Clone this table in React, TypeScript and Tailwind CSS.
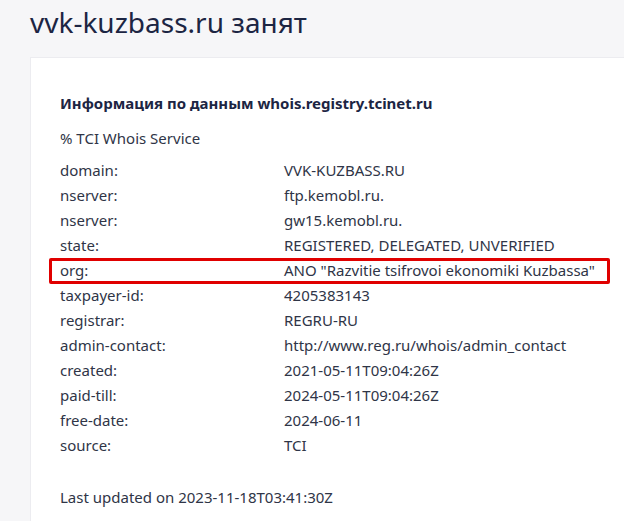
const rows: [string, string][] = [
  ['domain:', 'VVK-KUZBASS.RU'],
  ['nserver:', 'ftp.kemobl.ru.'],
  ['nserver:', 'gw15.kemobl.ru.'],
  ['state:', 'REGISTERED, DELEGATED, UNVERIFIED'],
  ['org:', 'ANO "Razvitie tsifrovoi ekonomiki Kuzbassa"'],
  ['taxpayer-id:', '4205383143'],
  ['registrar:', 'REGRU-RU'],
  ['admin-contact:', 'http://www.reg.ru/whois/admin_contact'],
  ['created:', '2021-05-11T09:04:26Z'],
  ['paid-till:', '2024-05-11T09:04:26Z'],
  ['free-date:', '2024-06-11'],
  ['source:', 'TCI'],
];

export default function App() {
  return (
    <div className="min-h-[521px] w-[624px] overflow-hidden bg-[#f6f6f8] pl-[30px] pt-[2px] font-['Noto_Sans',sans-serif] text-[#2f3547]">
      <h1 className="text-[28px] leading-[40px] text-[#1c2543]">vvk-kuzbass.ru занят</h1>

      <div className="mt-[15px] w-[640px] border border-[#ececf0] bg-white pl-[29px] pt-[33px] pb-[20px]">
        <h2 className="text-[15px] font-bold leading-[24px] text-[#1c2543]">
          Информация по данным whois.registry.tcinet.ru
        </h2>
        <p className="mt-[11px] text-[15px] leading-[24px]">% TCI Whois Service</p>

        <div className="mt-[8px] text-[15px]">
          {rows.map(([label, value], i) => {
            const isOrg = label === 'org:';
            return (
              <div key={i} className="relative flex h-[25px] items-center">
                {isOrg && (
                  <div className="absolute -left-[11px] top-[0px] h-[26px] w-[561px] rounded-[2px] border-[3px] border-[#e00000]" />
                )}
                <span className="w-[224px]">{label}</span>
                <span>{value}</span>
              </div>
            );
          })}
        </div>

        <p className="mt-[27px] text-[15px] leading-[24px]">Last updated on 2023-11-18T03:41:30Z</p>
      </div>
    </div>
  );
}
